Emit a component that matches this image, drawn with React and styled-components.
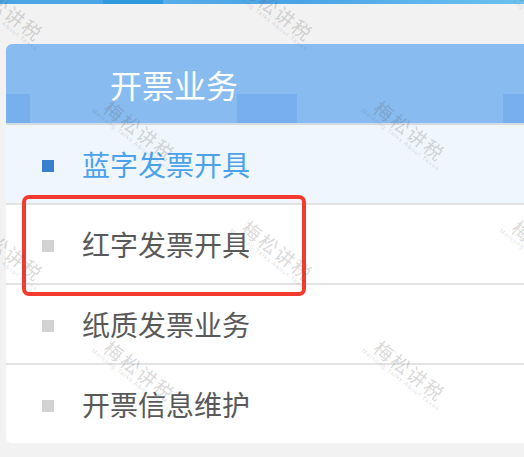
import React from "react";
import styled, { createGlobalStyle } from "styled-components";

const Global = createGlobalStyle`
  html, body {
    margin: 0;
    padding: 0;
    background: #f2f2f2;
    overflow: hidden;
  }
  body {
    font-family: "Noto Sans CJK SC", "Microsoft YaHei", "Noto Sans", sans-serif;
  }
`;

const Page = styled.div`
  position: relative;
  width: 524px;
  height: 457px;
  overflow: hidden;
  background: #f2f2f2;
`;

const TopStrip = styled.div`
  height: 4px;
  background: linear-gradient(
    to right,
    #4aa5e5 0,
    #4aa5e5 103px,
    #2f9ae0 103px,
    #2f9ae0 163px,
    #55aee8 163px,
    #4aa3e6 300px,
    #5db6ec 420px,
    #6cc2ef 524px
  );
`;

const Content = styled.div`
  padding: 40px 0 0 6px;
`;

const Card = styled.div`
  background: #ffffff;
  border-radius: 6px;
  margin-right: -20px;
  overflow: hidden;
`;

const block = "linear-gradient(#77b0ec, #77b0ec)";

const Header = styled.div`
  height: 79px;
  display: flex;
  align-items: center;
  padding-left: 104px;
  font-size: 32px;
  line-height: 1;
  color: #ffffff;
  background-color: #88bbf0;
  background-image: ${block}, ${block}, ${block};
  background-repeat: no-repeat;
  background-size: 24px 29px, 60px 29px, 40px 29px;
  background-position: 0 50px, 231px 50px, 497px 50px;
  border-bottom: 2px solid #d4dae2;
`;

const Row = styled.div`
  position: relative;
  height: 78px;
  display: flex;
  align-items: center;
  gap: 28px;
  padding-left: 36px;
  font-size: 28px;
  line-height: 1;
  color: ${(p) => (p.$active ? "#4ba2ea" : "#595959")};
  background: ${(p) => (p.$active ? "#f0f6fe" : "#ffffff")};
  border-bottom: ${(p) => (p.$last ? "none" : "2px solid #e3e3e3")};
`;

const Bullet = styled.span`
  width: 12px;
  height: 12px;
  flex: none;
  margin-top: 3px;
  background: ${(p) => (p.$active ? "#3a7fcf" : "#d2d2d2")};
`;

const Label = styled.span`
  display: block;
`;

const Highlight = styled.div`
  position: absolute;
  left: 16px;
  top: -10px;
  width: 284px;
  height: 101px;
  box-sizing: border-box;
  border: 4px solid #f43b30;
  border-radius: 7px;
  z-index: 2;
  pointer-events: none;
`;

const Overlay = styled.div`
  position: absolute;
  inset: 0;
  pointer-events: none;
  z-index: 5;
`;

const Mark = styled.div`
  position: absolute;
  display: flex;
  flex-direction: column;
  align-items: flex-start;
  transform: translate(-50%, -50%) rotate(38deg);
  color: rgba(90, 90, 90, 0.24);
  white-space: nowrap;
`;

const MarkBig = styled.span`
  font-size: 19px;
  line-height: 1;
  letter-spacing: 2px;
  margin-left: 8px;
`;

const MarkSmall = styled.span`
  font-family: "Liberation Sans", Arial, sans-serif;
  font-size: 6px;
  line-height: 1;
  letter-spacing: 1px;
  margin-top: 1px;
`;

const marks = [
  [5, 12],
  [275, 12],
  [545, 12],
  [137, 132],
  [407, 132],
  [5, 252],
  [275, 252],
  [545, 252],
  [137, 372],
  [407, 372],
];

const items = [
  { label: "蓝字发票开具", active: true },
  { label: "红字发票开具", highlight: true },
  { label: "纸质发票业务" },
  { label: "开票信息维护" },
];

export default function App() {
  return (
    <>
      <Global />
      <Page>
        <TopStrip />
        <Content>
          <Card>
            <Header>开票业务</Header>
            {items.map((it, i) => (
              <Row key={it.label} $active={it.active} $last={i === items.length - 1}>
                <Bullet $active={it.active} />
                <Label>{it.label}</Label>
                {it.highlight && <Highlight />}
              </Row>
            ))}
          </Card>
        </Content>
        <Overlay>
          {marks.map(([x, y]) => (
            <Mark key={`${x}-${y}`} style={{ left: x, top: y }}>
              <MarkBig>梅松讲税</MarkBig>
              <MarkSmall>Meisong Talks About Taxes</MarkSmall>
            </Mark>
          ))}
        </Overlay>
      </Page>
    </>
  );
}
